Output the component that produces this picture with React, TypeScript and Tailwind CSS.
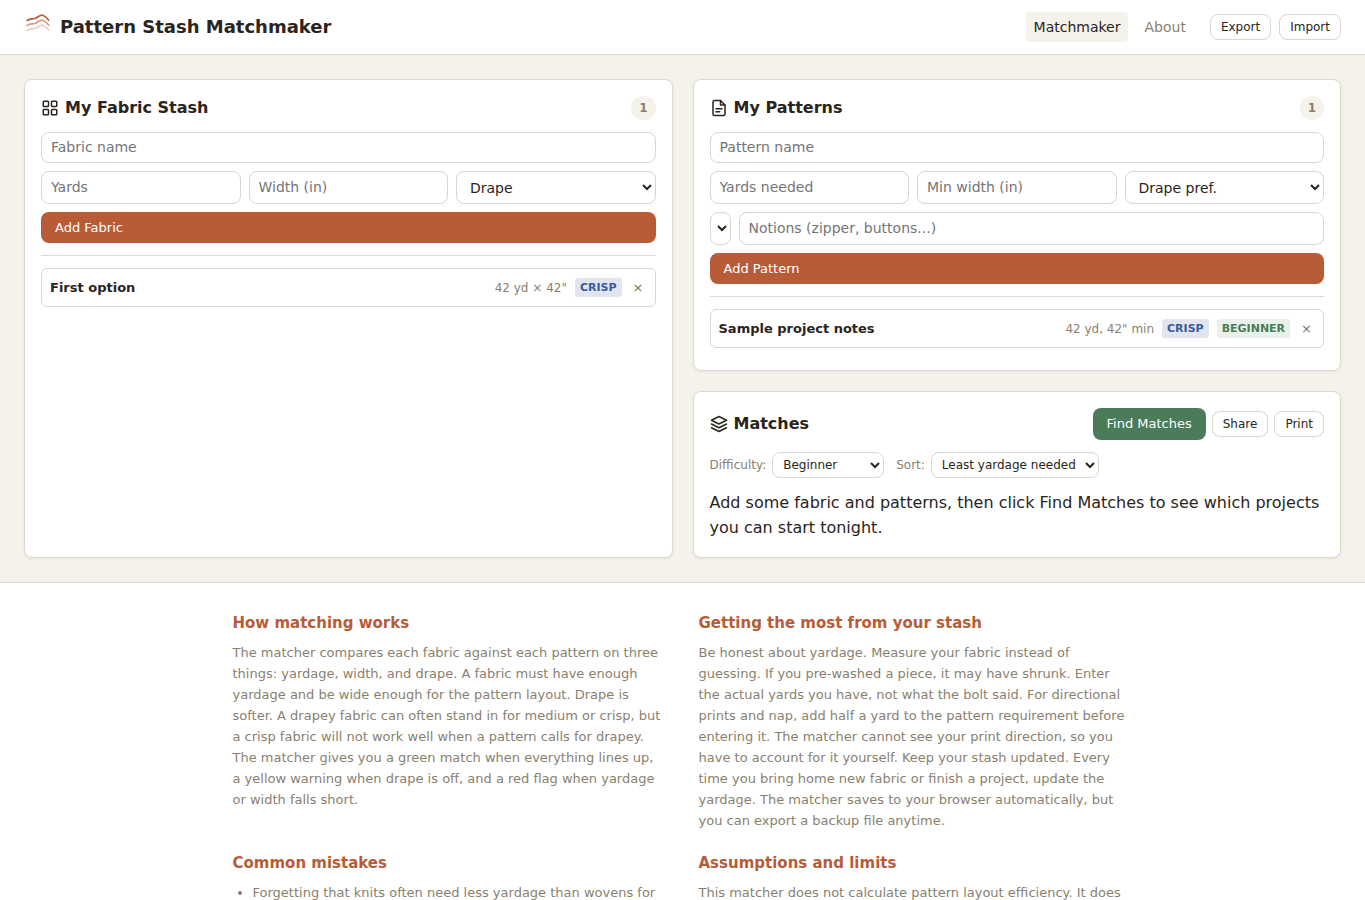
import { useState, type ReactNode } from "react";
import { LayoutGrid } from "lucide-react";

type Fabric = {
  id: string;
  name: string;
  yards: number;
  width: number;
  drape: string;
};

type Pattern = Fabric & {
  difficulty: string;
};

const initialFabrics: Fabric[] = [
  { id: "f1", name: "First option", yards: 42, width: 42, drape: "Crisp" },
];

const initialPatterns: Pattern[] = [
  { id: "p1", name: "Sample project notes", yards: 42, width: 42, drape: "Crisp", difficulty: "Beginner" },
];

const fieldClass =
  "w-full min-w-0 min-h-[31px] rounded-lg border border-[#d9d6d0] bg-white px-[9px] text-sm leading-normal placeholder:text-[#757575]";
const selectClass = "w-full min-w-0 h-[33px] rounded-lg border border-[#d9d6d0] bg-white px-[9px] text-sm";
const smallSelectClass = "h-[26px] rounded-lg border border-[#d9d6d0] bg-white px-[6px] text-xs";
const smallButtonClass =
  "h-[26px] rounded-lg border border-[#d9d6d0] bg-white px-[10px] text-xs hover:bg-[#f5f2ec]";
const addButtonClass =
  "block w-full h-[31px] rounded-lg bg-[#b85c38] px-[14px] text-left text-[13px] text-white hover:bg-[#a34f2e]";

function Logo() {
  return (
    <svg width="28" height="28" viewBox="0 0 28 28" fill="none" strokeWidth="1.6" strokeLinecap="round" aria-hidden="true">
      <path d="M3 7.500C6.500 5 9 6.500 12 5S16 1.800 18.500 2.200s4.500 3 6.200 5" stroke="#b85c38" />
      <path d="M3 12.500C6.500 10 9 11.500 12 10S16 6.800 18.500 7.200s4.500 3 6.200 5" stroke="#b85c38" opacity="0.6" />
      <path d="M3 17.500C6.500 15 9 16.500 12 15S16 11.800 18.500 12.200s4.500 3 6.200 5" stroke="#b85c38" opacity="0.3" />
    </svg>
  );
}

function StrokeIcon({ children }: { children: ReactNode }) {
  return (
    <svg
      width="18"
      height="18"
      viewBox="0 0 24 24"
      fill="none"
      stroke="currentColor"
      strokeWidth="2"
      strokeLinecap="round"
      strokeLinejoin="round"
      aria-hidden="true"
    >
      {children}
    </svg>
  );
}

function Card({ children, className = "" }: { children: ReactNode; className?: string }) {
  return (
    <section
      className={`rounded-lg border border-[#dedad2] bg-white p-4 shadow-[0_1px_3px_rgba(44,36,24,0.08)] ${className}`}
    >
      {children}
    </section>
  );
}

function CardHeader({ icon, title, count }: { icon: ReactNode; title: string; count: number }) {
  return (
    <div className="mb-3 flex items-center justify-between">
      <h2 className="flex items-center gap-[6px] text-base leading-6 font-bold">
        {icon}
        {title}
      </h2>
      <span className="rounded-full bg-[#f5f2ec] px-2 text-xs leading-6 font-bold text-[#8a7f6e]">{count}</span>
    </div>
  );
}

function StashItem({
  name,
  meta,
  drape,
  difficulty,
  onRemove,
}: {
  name: string;
  meta: string;
  drape: string;
  difficulty?: string;
  onRemove: () => void;
}) {
  return (
    <li className="mb-[6px] flex h-[39px] items-center gap-2 rounded-md border border-[#d9d6d0] px-2">
      <span className="flex-1 text-[13px] font-bold">{name}</span>
      <span className="text-xs text-[#8a7f6e]">{meta}</span>
      <span className="rounded-[3px] bg-[#e1e5f0] px-[5px] text-[11px] leading-[19px] font-bold text-[#3a5a9c] uppercase">
        {drape}
      </span>
      {difficulty && (
        <span className="rounded-[3px] bg-[#e8f2ea] px-[5px] text-[11px] leading-[19px] font-bold text-[#4a7c59] uppercase">
          {difficulty}
        </span>
      )}
      <button type="button" onClick={onRemove} aria-label={`Remove ${name}`} className="px-[3px] text-[13px] text-[#7d7465]">
        ×
      </button>
    </li>
  );
}

function InfoBlock({ title, children }: { title: string; children: ReactNode }) {
  return (
    <article>
      <h3 className="mb-[6px] text-[15px] leading-[25px] font-bold text-[#b85c38]">{title}</h3>
      <div className="pr-1 text-[13px] leading-[21px] text-[#8a7f6e]">{children}</div>
    </article>
  );
}

export default function App() {
  const [fabrics, setFabrics] = useState<Fabric[]>(initialFabrics);
  const [patterns, setPatterns] = useState<Pattern[]>(initialPatterns);

  return (
    <div className="min-h-screen bg-white font-['DejaVu_Sans',sans-serif] text-[#2a241c]">
      <header className="flex items-center justify-between border-b border-[#dedad2] px-6 py-3">
        <div className="flex items-center gap-2">
          <Logo />
          <h1 className="text-lg leading-[30px] font-bold">Pattern Stash Matchmaker</h1>
        </div>
        <div className="flex items-center gap-4">
          <nav className="flex gap-2 text-sm leading-[22px]">
            <a href="#matchmaker" className="rounded bg-[#f5f2ec] px-2 py-1">
              Matchmaker
            </a>
            <a href="#about" className="rounded px-2 py-1 text-[#8a7f6e]">
              About
            </a>
          </nav>
          <div className="flex gap-2">
            <button type="button" className={smallButtonClass}>
              Export
            </button>
            <button type="button" className={smallButtonClass}>
              Import
            </button>
          </div>
        </div>
      </header>

      <main className="grid gap-5 border-b border-[#dedad2] bg-[#f5f2ec] p-6 md:grid-cols-2">
        <Card className="md:row-span-2">
          <CardHeader icon={<LayoutGrid size={18} />} title="My Fabric Stash" count={fabrics.length} />
          <form className="space-y-2" onSubmit={(e) => e.preventDefault()}>
            <input aria-label="Fabric name" placeholder="Fabric name" className={fieldClass} />
            <div className="grid grid-cols-3 gap-2">
              <input type="number" aria-label="Yards" placeholder="Yards" className={fieldClass} />
              <input type="number" aria-label="Width in inches" placeholder="Width (in)" className={fieldClass} />
              <select aria-label="Drape" className={selectClass}>
                <option>Drape</option>
                <option>Crisp</option>
                <option>Medium</option>
                <option>Drapey</option>
              </select>
            </div>
            <button type="submit" className={addButtonClass}>
              Add Fabric
            </button>
          </form>
          <ul className="mt-3 border-t border-[#dedad2] pt-3">
            {fabrics.map((f) => (
              <StashItem
                key={f.id}
                name={f.name}
                meta={`${f.yards} yd × ${f.width}"`}
                drape={f.drape}
                onRemove={() => setFabrics((prev) => prev.filter((x) => x.id !== f.id))}
              />
            ))}
          </ul>
        </Card>

        <Card>
          <CardHeader
            icon={
              <StrokeIcon>
                <path d="M14 2H6a2 2 0 0 0-2 2v16a2 2 0 0 0 2 2h12a2 2 0 0 0 2-2V8z" />
                <path d="M14 2v6h6M8 13h8M8 17h5" />
              </StrokeIcon>
            }
            title="My Patterns"
            count={patterns.length}
          />
          <form className="space-y-2" onSubmit={(e) => e.preventDefault()}>
            <input aria-label="Pattern name" placeholder="Pattern name" className={fieldClass} />
            <div className="grid grid-cols-3 gap-2">
              <input type="number" aria-label="Yards needed" placeholder="Yards needed" className={fieldClass} />
              <input type="number" aria-label="Minimum width in inches" placeholder="Min width (in)" className={fieldClass} />
              <select aria-label="Drape preference" className={selectClass}>
                <option>Drape pref.</option>
                <option>Crisp</option>
                <option>Medium</option>
                <option>Drapey</option>
              </select>
            </div>
            <div className="flex gap-2">
              <select
                aria-label="Difficulty"
                className="h-[33px] w-[21px] shrink-0 rounded-lg border border-[#d9d6d0] bg-white"
              >
                <option></option>
                <option>Beginner</option>
                <option>Intermediate</option>
                <option>Advanced</option>
              </select>
              <input aria-label="Notions" placeholder="Notions (zipper, buttons...)" className={fieldClass} />
            </div>
            <button type="submit" className={addButtonClass}>
              Add Pattern
            </button>
          </form>
          <ul className="mt-3 border-t border-[#dedad2] pt-3">
            {patterns.map((p) => (
              <StashItem
                key={p.id}
                name={p.name}
                meta={`${p.yards} yd, ${p.width}" min`}
                drape={p.drape}
                difficulty={p.difficulty}
                onRemove={() => setPatterns((prev) => prev.filter((x) => x.id !== p.id))}
              />
            ))}
          </ul>
        </Card>

        <Card>
          <div className="mb-3 flex items-center justify-between">
            <h2 className="flex items-center gap-[6px] text-base leading-6 font-bold">
              <StrokeIcon>
                <path d="M12 2 2 7l10 5 10-5z" />
                <path d="m2 17 10 5 10-5M2 12l10 5 10-5" />
              </StrokeIcon>
              Matches
            </h2>
            <div className="flex items-center gap-[6px]">
              <button
                type="button"
                className="h-8 rounded-lg bg-[#4a7c59] px-[14px] text-[13px] text-white hover:bg-[#3e6b4b]"
              >
                Find Matches
              </button>
              <button type="button" className={smallButtonClass}>
                Share
              </button>
              <button type="button" className={smallButtonClass}>
                Print
              </button>
            </div>
          </div>
          <div className="mb-3 flex flex-wrap items-center gap-x-3 gap-y-2 text-xs">
            <div className="flex items-center gap-[6px]">
              <label htmlFor="difficulty" className="text-[#8a7f6e]">
                Difficulty:
              </label>
              <select id="difficulty" className={smallSelectClass} defaultValue="Beginner">
                <option>All</option>
                <option>Beginner</option>
                <option>Intermediate</option>
                <option>Advanced</option>
              </select>
            </div>
            <div className="flex items-center gap-[6px]">
              <label htmlFor="sort" className="text-[#8a7f6e]">
                Sort:
              </label>
              <select id="sort" className={smallSelectClass} defaultValue="Least yardage needed">
                <option>Best match</option>
                <option>Least yardage needed</option>
              </select>
            </div>
          </div>
          <p className="mb-px text-base leading-[25px]">
            Add some fabric and patterns, then click Find Matches to see which projects you can start tonight.
          </p>
        </Card>
      </main>

      <section className="mx-auto grid max-w-[900px] gap-x-8 gap-y-5 pt-7 md:grid-cols-2">
        <InfoBlock title="How matching works">
          <p>
            The matcher compares each fabric against each pattern on three things: yardage, width, and drape. A fabric
            must have enough yardage and be wide enough for the pattern layout. Drape is softer. A drapey fabric can
            often stand in for medium or crisp, but a crisp fabric will not work well when a pattern calls for drapey.
            The matcher gives you a green match when everything lines up, a yellow warning when drape is off, and a red
            flag when yardage or width falls short.
          </p>
        </InfoBlock>
        <InfoBlock title="Getting the most from your stash">
          <p>
            Be honest about yardage. Measure your fabric instead of guessing. If you pre-washed a piece, it may have
            shrunk. Enter the actual yards you have, not what the bolt said. For directional prints and nap, add half a
            yard to the pattern requirement before entering it. The matcher cannot see your print direction, so you have
            to account for it yourself. Keep your stash updated. Every time you bring home new fabric or finish a
            project, update the yardage. The matcher saves to your browser automatically, but you can export a backup
            file anytime.
          </p>
        </InfoBlock>
        <InfoBlock title="Common mistakes">
          <ul className="list-disc pl-5">
            <li>Forgetting that knits often need less yardage than wovens for</li>
          </ul>
        </InfoBlock>
        <InfoBlock title="Assumptions and limits">
          <p>This matcher does not calculate pattern layout efficiency. It does</p>
        </InfoBlock>
      </section>
    </div>
  );
}
